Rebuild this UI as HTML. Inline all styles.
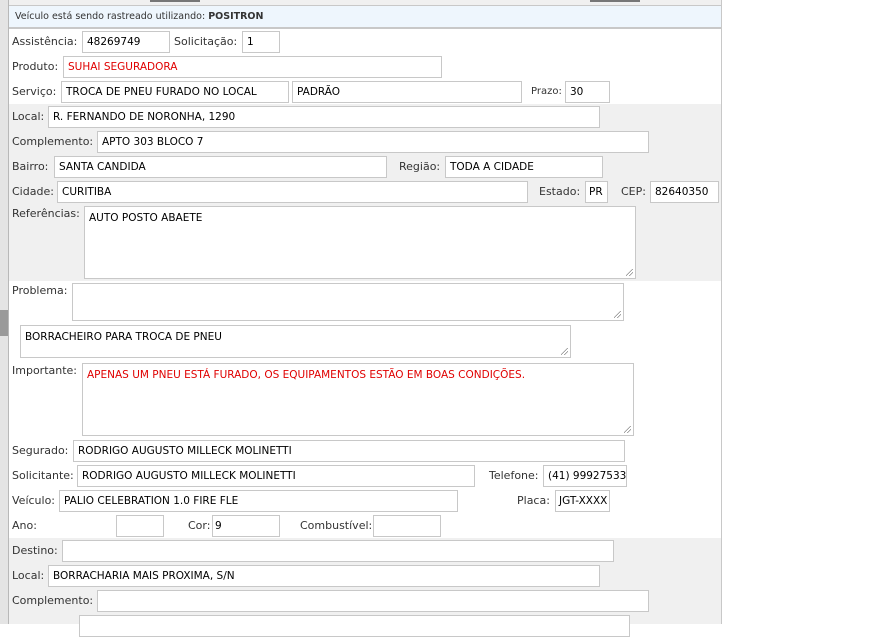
<!DOCTYPE html>
<html><head><meta charset="utf-8"><style>
body{margin:0;width:877px;height:624px;overflow:hidden;background:#fff;position:relative;font-family:"DejaVu Sans",Verdana,sans-serif;}
.a{position:absolute}
.l{position:absolute;font-size:11px;color:#333;line-height:14px;white-space:nowrap}
.i{position:absolute;box-sizing:border-box;border:1px solid #c8c8c8;background:#fff;height:22px;font-family:"DejaVu Sans",Tahoma,sans-serif;font-size:10.5px;line-height:21px;padding-left:4px;color:#000;white-space:nowrap;overflow:hidden}
.t{line-height:14px;padding-top:4px}
.r{color:#e00000}
.g{position:absolute;left:9px;width:712px;background:#f0f0f0}
.rs{position:absolute;right:2px;bottom:2px;width:7px;height:7px;background:linear-gradient(135deg,transparent 45%,#888 45%,#888 52%,transparent 52%,transparent 70%,#888 70%,#888 77%,transparent 77%)}
</style></head><body>
<div class="a" style="left:0;top:0;width:8px;height:624px;background:#e4e4e4;border-right:1px solid #b8b8b8"></div>
<div class="a" style="left:0;top:310px;width:8px;height:26px;background:#9a9a9a"></div>
<div class="a" style="left:721px;top:0;width:1px;height:624px;background:#c8c8c8"></div>
<div class="a" style="left:9px;top:0;width:712px;height:5px;background:#f0f0f0;border-bottom:1px solid #c8c8c8"></div>
<div class="a" style="left:150px;top:0;width:50px;height:2px;background:#777"></div>
<div class="a" style="left:590px;top:0;width:50px;height:2px;background:#777"></div>
<div class="a" style="left:9px;top:6px;width:712px;height:21px;background:#eef6fd;border-bottom:2px solid #c8c8c8"></div>
<div class="l" style="left:15px;top:10px;font-size:9.5px">Veículo está sendo rastreado utilizando: <b>POSITRON</b></div>
<div class="g" style="top:104px;height:177px"></div>
<div class="g" style="top:538px;height:86px"></div>

<div class="l" style="left:12px;top:35px">Assistência:</div><div class="i" style="left:82px;top:31px;width:88px">48269749</div>
<div class="l" style="left:174px;top:35px">Solicitação:</div><div class="i" style="left:242px;top:31px;width:38px">1</div>
<div class="l" style="left:12px;top:60px">Produto:</div><div class="i r" style="left:63px;top:56px;width:379px">SUHAI SEGURADORA</div>
<div class="l" style="left:12px;top:85px">Serviço:</div><div class="i" style="left:61px;top:81px;width:228px">TROCA DE PNEU FURADO NO LOCAL</div>
<div class="i" style="left:292px;top:81px;width:230px">PADRÃO</div>
<div class="l" style="left:531px;top:85px;font-size:10px">Prazo:</div><div class="i" style="left:565px;top:81px;width:45px">30</div>

<div class="l" style="left:12px;top:110px">Local:</div><div class="i" style="left:48px;top:106px;width:552px">R. FERNANDO DE NORONHA, 1290</div>
<div class="l" style="left:12px;top:135px">Complemento:</div><div class="i" style="left:97px;top:131px;width:552px">APTO 303 BLOCO 7</div>
<div class="l" style="left:12px;top:160px">Bairro:</div><div class="i" style="left:54px;top:156px;width:333px">SANTA CANDIDA</div>
<div class="l" style="left:399px;top:160px">Região:</div><div class="i" style="left:445px;top:156px;width:158px">TODA A CIDADE</div>
<div class="l" style="left:12px;top:185px">Cidade:</div><div class="i" style="left:57px;top:181px;width:471px">CURITIBA</div>
<div class="l" style="left:539px;top:185px">Estado:</div><div class="i" style="left:585px;top:181px;width:23px;padding-left:3px">PR</div>
<div class="l" style="left:621px;top:185px">CEP:</div><div class="i" style="left:650px;top:181px;width:69px">82640350</div>
<div class="l" style="left:12px;top:207px">Referências:</div><div class="i t" style="left:84px;top:206px;width:552px;height:73px">AUTO POSTO ABAETE<div class="rs"></div></div>

<div class="l" style="left:12px;top:284px">Problema:</div><div class="i t" style="left:72px;top:283px;width:552px;height:38px"><div class="rs"></div></div>
<div class="i t" style="left:20px;top:325px;width:551px;height:33px">BORRACHEIRO PARA TROCA DE PNEU<div class="rs"></div></div>
<div class="l" style="left:12px;top:364px">Importante:</div><div class="i t r" style="left:82px;top:363px;width:552px;height:73px">APENAS UM PNEU ESTÁ FURADO, OS EQUIPAMENTOS ESTÃO EM BOAS CONDIÇÕES.<div class="rs"></div></div>

<div class="l" style="left:12px;top:444px">Segurado:</div><div class="i" style="left:73px;top:440px;width:552px">RODRIGO AUGUSTO MILLECK MOLINETTI</div>
<div class="l" style="left:12px;top:469px">Solicitante:</div><div class="i" style="left:77px;top:465px;width:398px">RODRIGO AUGUSTO MILLECK MOLINETTI</div>
<div class="l" style="left:489px;top:469px">Telefone:</div><div class="i" style="left:543px;top:465px;width:84px">(41) 999275334</div>
<div class="l" style="left:12px;top:494px">Veículo:</div><div class="i" style="left:59px;top:490px;width:399px">PALIO CELEBRATION 1.0 FIRE FLE</div>
<div class="l" style="left:517px;top:494px">Placa:</div><div class="i" style="left:555px;top:490px;width:55px;padding-left:3px">JGT-XXXX</div>
<div class="l" style="left:12px;top:519px">Ano:</div><div class="i" style="left:116px;top:515px;width:48px"></div>
<div class="l" style="left:188px;top:519px">Cor:</div><div class="i" style="left:212px;top:515px;width:68px;padding-left:2px">9</div>
<div class="l" style="left:300px;top:519px">Combustível:</div><div class="i" style="left:373px;top:515px;width:68px"></div>

<div class="l" style="left:12px;top:544px">Destino:</div><div class="i" style="left:62px;top:540px;width:552px"></div>
<div class="l" style="left:12px;top:569px">Local:</div><div class="i" style="left:48px;top:565px;width:552px">BORRACHARIA MAIS PROXIMA, S/N</div>
<div class="l" style="left:12px;top:594px">Complemento:</div><div class="i" style="left:97px;top:590px;width:552px"></div>
<div class="i" style="left:79px;top:615px;width:551px"></div>
</body></html>
